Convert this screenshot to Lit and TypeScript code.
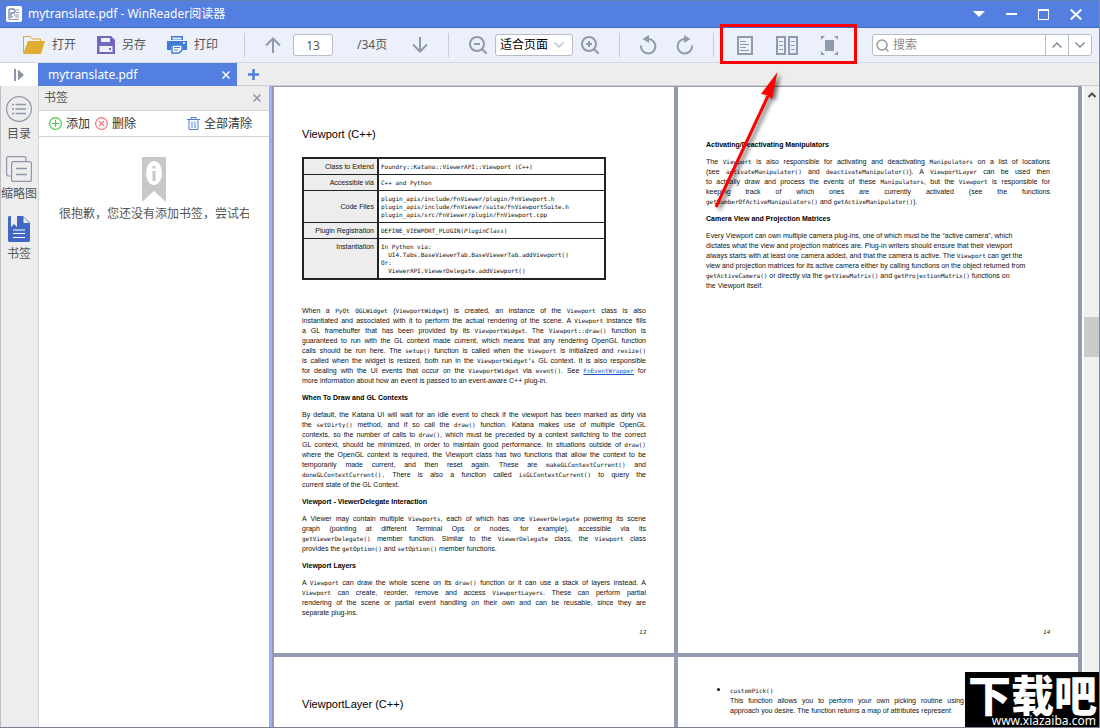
import { LitElement, html, css, svg } from "lit";
import { customElement, property } from "lit/decorators.js";
import { classMap } from "lit/directives/class-map.js";

/* Splits a line on back-ticks (code) and square brackets (link). */
const inline = (line: string) =>
  line.split(/(`[^`]+`|\[[^\]]+\])/).map((part) => {
    if (part.startsWith("`")) return html`<code>${part.slice(1, -1)}</code>`;
    if (part.startsWith("[")) return html`<a href="#wrapper"><code>${part.slice(1, -1)}</code></a>`;
    return part;
  });

const para = (lines: string[], ragged = false) =>
  html`<p class=${classMap({ ragged })}>${lines.map((l) => html`<span class="line">${inline(l)}</span>`)}</p>`;

@customElement("pdf-page")
export class PdfPage extends LitElement {
  @property({ type: Number }) number = 13;

  static styles = css`
    :host {
      display: flex;
      flex-direction: column;
      box-sizing: border-box;
      aspect-ratio: 400 / 566;
      padding: 28px 28px 16px;
      background: #fff;
      color: #111;
      font: 7px/10px "Liberation Sans", Arial, sans-serif;
      overflow: hidden;
    }
    h1 { margin: 12px 0 16px; font-size: 11px; line-height: 14px; font-weight: 400; color: #000; }
    h2 { margin: 0 0 7px; font-size: 7px; line-height: 10px; font-weight: 700; color: #000; }
    h2.first { margin-top: 25px; }
    p { margin: 0 0 7px; }
    .line { display: block; text-align: justify; text-align-last: justify; }
    .line:last-child, .ragged .line { text-align: left; text-align-last: left; }
    code { font: 6px/10px "DejaVu Sans Mono", monospace; }
    a { color: #1155cc; }
    table { width: 304px; border-collapse: collapse; margin-bottom: 26px; border: 2px solid #222; }
    th, td { border: 1px solid #222; padding: 4px 3px 3px; line-height: 8px; vertical-align: top; }
    th { width: 67px; background: #ededed; font-weight: 400; text-align: right; white-space: nowrap; border-right-width: 2px; }
    th.middle { vertical-align: middle; }
    td { padding-left: 2px; font: 6px/8px "DejaVu Sans Mono", monospace; white-space: pre; }
    footer { margin-top: auto; font-size: 6px; font-style: italic; text-align: right; }
    ul { margin: 0; padding: 0 86px 0 24px; list-style: disc; }
    li::marker { font-size: 10px; }
    .item { display: block; }
  `;

  private thirteen() {
    return html`
      <h1>Viewport (C++)</h1>
      <table>
        <tr><th scope="row">Class to Extend</th><td>Foundry::Katana::ViewerAPI::Viewport (C++)</td></tr>
        <tr><th scope="row">Accessible via</th><td>C++ and Python</td></tr>
        <tr><th scope="row" class="middle">Code Files</th><td>${"plugin_apis/include/FnViewer/plugin/FnViewport.h\nplugin_apis/include/FnViewer/suite/FnViewportSuite.h\nplugin_apis/src/FnViewer/plugin/FnViewport.cpp"}</td></tr>
        <tr><th scope="row">Plugin Registration</th><td>DEFINE_VIEWPORT_PLUGIN(<i>PluginClass</i>)</td></tr>
        <tr><th scope="row">Instantiation</th><td>${"In Python via:\n  UI4.Tabs.BaseViewerTab.BaseViewerTab.addViewport()\nOr:\n  ViewerAPI.ViewerDelegate.addViewport()"}</td></tr>
      </table>
      ${para([
        "When a `PyQt` `QGLWidget` (`ViewportWidget`) is created, an instance of the `Viewport` class is also",
        "instantiated and associated with it to perform the actual rendering of the scene. A `Viewport` instance fills",
        "a GL framebuffer that has been provided by its `ViewportWidget`. The `Viewport::draw()` function is",
        "guaranteed to run with the GL context made current, which means that any rendering OpenGL function",
        "calls should be run here. The `setup()` function is called when the `Viewport` is initialized and `resize()`",
        "is called when the widget is resized, both run in the `ViewportWidget’s` GL context. It is also responsible",
        "for dealing with the UI events that occur on the `ViewportWidget` via `event()`. See [FnEventWrapper] for",
        "more information about how an event is passed to an event-aware C++ plug-in.",
      ])}
      <h2>When To Draw and GL Contexts</h2>
      ${para([
        "By default, the Katana UI will wait for an idle event to check if the viewport has been marked as dirty via",
        "the `setDirty()` method, and if so call the `draw()` function. Katana makes use of multiple OpenGL",
        "contexts, so the number of calls to `draw()`, which must be preceded by a context switching to the correct",
        "GL context, should be minimized, in order to maintain good performance. In situations outside of `draw()`",
        "where the OpenGL context is required, the Viewport class has two functions that allow the context to be",
        "temporarily made current, and then reset again. These are `makeGLContextCurrent()` and",
        "`doneGLContextCurrent().` There is also a function called `isGLContextCurrent()` to query the",
        "current state of the GL Context.",
      ])}
      <h2>Viewport - ViewerDelegate Interaction</h2>
      ${para([
        "A Viewer may contain multiple `Viewports`, each of which has one `ViewerDelegate` powering its scene",
        "graph (pointing at different Terminal Ops or nodes, for example), accessible via its",
        "`getViewerDelegate()` member function. Similar to the `ViewerDelegate` class, the `Viewport` class",
        "provides the `getOption()` and `setOption()` member functions.",
      ])}
      <h2>Viewport Layers</h2>
      ${para([
        "A `Viewport` can draw the whole scene on its `draw()` function or it can use a stack of layers instead. A",
        "`Viewport` can create, reorder, remove and access `ViewportLayers`. These can perform partial",
        "rendering of the scene or partial event handling on their own and can be reusable, since they are",
        "separate plug-ins.",
      ])}
      <footer>13</footer>`;
  }

  private fourteen() {
    return html`
      <h2 class="first">Activating/Deactivating Manipulators</h2>
      ${para([
        "The `Viewport` is also responsible for activating and deactivating `Manipulators` on a list of locations",
        "(see `activateManipulator()` and `deactivateManipulator()`). A `ViewportLayer` can be used then",
        "to actually draw and process the events of these `Manipulators`, but the `Viewport` is responsible for",
        "keeping track of which ones are currently activated (see the functions",
        "`getNumberOfActiveManipulators()` and `getActiveManipulator()`).",
      ])}
      <h2>Camera View and Projection Matrices</h2>
      ${para([
        "Every Viewport can own multiple camera plug-ins, one of which must be the “active camera”, which",
        "dictates what the view and projection matrices are. Plug-in writers should ensure that their viewport",
        "always starts with at least one camera added, and that the camera is active. The `Viewport` can get the",
        "view and projection matrices for its active camera either by calling functions on the object returned from",
        "`getActiveCamera()` or directly via the `getViewMatrix()` and `getProjectionMatrix()` functions on",
        "the Viewport itself.",
      ], true)}
      <footer>14</footer>`;
  }

  private fifteen() {
    return html`
      <h1>ViewportLayer (C++)</h1>
      <table><tr><th scope="row">&nbsp;</th><td></td></tr></table>`;
  }

  private sixteen() {
    return html`
      <ul><li><code class="item">customPick()</code>
        <span class="line">This function allows you to perform your own picking routine using</span>
        <span class="line">approach you desire. The function returns a map of attributes represent</span>
      </li></ul>`;
  }

  render() {
    if (this.number === 13) return this.thirteen();
    if (this.number === 14) return this.fourteen();
    if (this.number === 15) return this.fifteen();
    return this.sixteen();
  }
}

const draw = (w: number, h: number, body: unknown) =>
  html`<svg width=${w} height=${h} viewBox="0 0 ${w} ${h}" fill="none" aria-hidden="true">${body}</svg>`;

const icons = {
  app: draw(16, 16, svg`<rect width="16" height="16" rx="2" fill="#fff"/><path d="M3 13V4q0-1 1-1h3q2 0 2 2t-2 2H5v5" stroke="#7187b8" stroke-width="1.3"/><path d="M10 4h3M10 6.5h3M8 9h5M5.500 11h2M9 11h4M3 13.500h10" stroke="#8a98b5" stroke-width="1.200"/>`),
  open: draw(22, 18, svg`<path d="M.5 16V.5h7l2 2.500h8V5" stroke="#e0a92e"/><path d="M5 5h17l-4 13H0Z" fill="#e0ac33"/>`),
  save: draw(18, 18, svg`<path fill-rule="evenodd" d="M0 0h14l4 4v14H0ZM4 2v4h9V2ZM2.500 10v6h13v-6Z" fill="#7566bd"/><path d="M12 13h2" stroke="#7566bd" stroke-width="2"/>`),
  print: draw(20, 18, svg`<path fill-rule="evenodd" d="M4 0h12v4H4ZM5.500 1.500v2h9v-2ZM0 5h20v9h-4v-4H4v4H0Z" fill="#3f7bd9"/><path d="M16 7h2" stroke="#fff" stroke-width="1.500"/><path d="M5 9v8h7l3-3V9Z" fill="#fff" stroke="#3f7bd9" stroke-width="1.500"/><path d="M7 11.500h6M7 14h4" stroke="#3f7bd9"/>`),
  up: draw(16, 16, svg`<path d="M8 16V1.500M1 8.500l7-7 7 7" stroke="#9199ae" stroke-width="2"/>`),
  down: draw(16, 16, svg`<path d="M8 0v14.500M1 7.500l7 7 7-7" stroke="#9199ae" stroke-width="2"/>`),
  zoomOut: draw(18, 18, svg`<circle cx="8" cy="8" r="7" stroke="#9199ae" stroke-width="2"/><path d="M13 13l5 5M5 8h6" stroke="#9199ae" stroke-width="2"/>`),
  zoomIn: draw(18, 18, svg`<circle cx="8" cy="8" r="7" stroke="#9199ae" stroke-width="2"/><path d="M13 13l5 5M5 8h6M8 5v6" stroke="#9199ae" stroke-width="2"/>`),
  left: draw(17, 20, svg`<path d="M1 10.500a7.200 7.200 0 1 0 7.500-6.500" stroke="#9199ae" stroke-width="2"/><path d="M9 0v8L2.500 4Z" fill="#9199ae"/>`),
  right: draw(17, 20, svg`<path d="M16 10.500a7.200 7.200 0 1 1-7.500-6.500" stroke="#9199ae" stroke-width="2"/><path d="M8 0v8l6.500-4Z" fill="#9199ae"/>`),
  single: draw(16, 19, svg`<rect x="1" y="1" width="14" height="17" stroke="#9199ae" stroke-width="2"/><path d="M3 5.500h6M3 8.500h9M3 11.500h6M3 14.500h9" stroke="#9199ae"/>`),
  double: draw(22, 19, svg`<path d="M1 1h8v17H1ZM13 1h8v17h-8Z" stroke="#9199ae" stroke-width="2"/><path d="M3 5.500h4M3 9.500h4M3 13.500h4M15 5.500h4M15 9.500h4M15 13.500h4" stroke="#9199ae"/>`),
  full: draw(17, 19, svg`<rect x="4" y="4" width="9" height="11" fill="#9199ae"/><path d="M0 0h4L0 4ZM17 0h-4l4 4ZM0 19h4l-4-4ZM17 19h-4l4-4Z" fill="#9199ae"/>`),
  search: draw(13, 13, svg`<circle cx="6" cy="6" r="5" stroke="#999" stroke-width="1.500"/><path d="M9.500 9.500l3 3" stroke="#999" stroke-width="1.500"/>`),
  chevUp: draw(10, 6, svg`<path d="M.5 5.500 5 1l4.500 4.500" stroke="#8289a0" stroke-width="1.500"/>`),
  chevDown: draw(10, 6, svg`<path d="M.5.500 5 5 9.500.500" stroke="#8289a0" stroke-width="1.500"/>`),
  menu: draw(12, 6, svg`<path d="M0 0h12L6 6Z" fill="#fff"/>`),
  min: draw(11, 2, svg`<path d="M0 1h11" stroke="#fff" stroke-width="2"/>`),
  max: draw(11, 11, svg`<path d="M.5 1h10v9.500H.5Z" stroke="#fff"/><path d="M0 1h11" stroke="#fff" stroke-width="2"/>`),
  close: draw(12, 11, svg`<path d="M.7.500l10.600 10M11.300.500.700 10.500" stroke="#fff" stroke-width="2"/>`),
  expand: draw(11, 12, svg`<path d="M1 0v12" stroke="#8c93a8" stroke-width="2"/><path d="M4 .500v11L10 6Z" fill="#8c93a8"/>`),
  tabClose: draw(8, 8, svg`<path d="M.5.500l7 7M7.500.500l-7 7" stroke="#fff" stroke-width="1.500"/>`),
  plus: draw(11, 11, svg`<path d="M5.500 0v11M0 5.500h11" stroke="#4f7de0" stroke-width="2.500"/>`),
  panelClose: draw(8, 8, svg`<path d="M.5.500l7 7M7.500.500l-7 7" stroke="#8f96a9" stroke-width="1.500"/>`),
  toc: draw(26, 26, svg`<circle cx="13" cy="13" r="12.400" stroke="#8f97ac" stroke-width="1.200"/><path d="M6 8.500h2M9.500 8.500H20M6 13h2M9.500 13H20M6 17.500h2M9.500 17.500H20" stroke="#8f97ac" stroke-width="1.500"/>`),
  thumbs: draw(26, 26, svg`<path d="M5 20H2.500Q.6 20 .6 18V2.500Q.6.600 2.500.600H18q2 0 2 2V5" stroke="#8f97ac" stroke-width="1.200"/><rect x="5.600" y="5.600" width="19.800" height="19.800" rx="2" stroke="#8f97ac" stroke-width="1.200"/><path d="M10 12.500h11M10 18.500h11" stroke="#8f97ac" stroke-width="1.500"/>`),
  marks: draw(22, 26, svg`<path d="M1 0h14l7 7v18l-1 1H1l-1-1V1Z" fill="#4268c6"/><path d="M3 0h6v11L6 8l-3 3ZM15.500 1v6H21Z" fill="#ededed"/><path d="M5 14h12M5 17.500h12M5 21.500h12" stroke="#fff"/>`),
  add: draw(13, 13, svg`<circle cx="6.500" cy="6.500" r="5.900" stroke="#4cc94c" stroke-width="1.200"/><path d="M6.500 3v7M3 6.500h7" stroke="#4cc94c" stroke-width="1.200"/>`),
  remove: draw(13, 13, svg`<circle cx="6.500" cy="6.500" r="5.900" stroke="#f07878" stroke-width="1.200"/><path d="M4 4l5 5M9 4l-5 5" stroke="#f07878" stroke-width="1.200"/>`),
  trash: draw(13, 13, svg`<path d="M0 2.500h13M4 2V.500h5V2M2 3v9.500h9V3M5 4.500V11M8 4.500V11" stroke="#4f7de0"/>`),
  empty: draw(24, 45, svg`<path d="M0 0h24v45L12 34 0 45Z" fill="#c8c8c8"/><ellipse cx="12" cy="16" rx="8" ry="12" fill="#fff"/><path d="M12 9v2.500M12 14v10" stroke="#c8c8c8" stroke-width="3"/>`),
  scrollUp: draw(8, 6, svg`<path d="M.5 5 4 1.500 7.500 5" stroke="#505050" stroke-width="2"/>`),
};

@customElement("app-root")
export class AppRoot extends LitElement {
  static styles = css`
    :host {
      display: flex;
      flex-direction: column;
      box-sizing: border-box;
      position: relative;
      height: 100vh;
      overflow: hidden;
      border-right: 1px solid #8288a0;
      border-bottom: 1px solid #7a7f91;
      background: #ededed;
      color: #555;
      font: 12px/16px "Noto Sans", "Noto Sans CJK SC", sans-serif;
    }
    svg { display: block; flex: none; }
    button, input, select { font: inherit; color: inherit; margin: 0; padding: 0; border: 0; background: none; box-sizing: border-box; }
    button { display: flex; align-items: center; flex: none; white-space: nowrap; }
    .titlebar { display: flex; align-items: center; flex: none; height: 28px; box-sizing: border-box; padding: 0 17px 0 6px; gap: 6px; border-top: 1px solid #5f83b8; border-bottom: 1px solid #3f6cd0; background: #527fe0; color: #fff; }
    .titlebar .name { flex: 1; }
    .window { display: flex; align-items: center; gap: 21px; }
    .toolbar { display: flex; align-items: center; flex: none; height: 35px; box-sizing: border-box; padding: 0 7px 0 23px; border-bottom: 1px solid #d4d8e0; background: #ebf0fb; }
    .files { display: flex; gap: 21px; padding-right: 26px; }
    .files button { gap: 7px; }
    .sep { flex: none; width: 1px; height: 24px; background: #c8ccd6; }
    .group { display: flex; align-items: center; padding: 0 20px; }
    .pager { gap: 12px; }
    .pager input { width: 40px; height: 22px; border: 1px solid #b8bdc4; border-radius: 3px; background: #fff; text-align: center; }
    .pager .total { width: 55px; box-sizing: border-box; padding-left: 12px; }
    .zoom { gap: 8px; }
    .fit { position: relative; display: flex; align-items: center; }
    .fit select { appearance: none; width: 78px; height: 22px; padding-left: 4px; border: 1px solid #b8bdc4; border-radius: 3px; background: #fff; color: #000; }
    .fit svg { position: absolute; right: 9px; opacity: 0.5; pointer-events: none; }
    .turn { gap: 19px; }
    .views { display: flex; gap: 23px; padding-left: 23px; }
    .search { display: flex; align-items: center; width: 220px; height: 22px; box-sizing: border-box; margin-left: auto; border: 1px solid #b8bdc4; border-radius: 3px; background: #fff; }
    .search label { display: flex; align-items: center; gap: 4px; flex: 1; padding-left: 3px; }
    .search input { width: 100%; min-width: 0; outline: 0; }
    .search input::placeholder { color: #8a8a8a; opacity: 1; }
    .search button { width: 23px; height: 20px; justify-content: center; border-left: 1px solid #b8bdc4; }
    .tabs { display: flex; align-items: center; flex: none; height: 23px; }
    .expand { width: 38px; height: 23px; padding-left: 14px; background: #fff; }
    .tab { display: flex; align-items: center; justify-content: space-between; width: 199px; height: 23px; box-sizing: border-box; padding: 0 7px 0 10px; background: #527fe0; color: #fff; }
    .newtab { flex: 1; height: 23px; padding-left: 11px; border-bottom: 1px solid #cfcfcf; }
    .main { display: flex; flex: 1; min-height: 0; }
    .rail { display: flex; flex-direction: column; gap: 14px; flex: none; width: 39px; box-sizing: border-box; padding: 10px 1px 0 0; border-left: 1px solid #c0c0c0; border-right: 1px solid #d4d4d4; }
    .rail button { flex-direction: column; gap: 4px; }
    .panel { display: flex; flex-direction: column; flex: none; width: 230px; background: #fff; }
    .head { display: flex; align-items: center; justify-content: space-between; height: 25px; box-sizing: border-box; padding: 0 8px 0 5px; border-bottom: 1px solid #d4d4d4; background: #ededed; }
    .actions { display: flex; align-items: center; gap: 5px; height: 26px; box-sizing: border-box; padding: 0 17px 0 10px; border-bottom: 1px solid #d4d4d4; color: #333; }
    .actions button { gap: 4px; }
    .actions button:last-child { margin-left: auto; }
    .none { display: flex; flex-direction: column; align-items: center; gap: 4px; padding: 20px 20px 0; }
    .none span { align-self: stretch; overflow: hidden; white-space: nowrap; }
    .split { flex: none; width: 3px; background: #96b3f8; }
    .view { flex: 1; min-width: 0; overflow: hidden; padding: 1px 4px 0 2px; background: #949bb0; }
    .pages { display: grid; grid-template-columns: 1fr 1fr; gap: 4px; }
    .scroll { display: flex; flex-direction: column; align-items: center; flex: none; width: 17px; box-sizing: border-box; background: #f0f0f0; border-left: 2px solid #fff; }
    .scroll button { height: 17px; }
    .thumb { width: 100%; height: 40px; margin-top: 214px; background: #cbcbcb; }
    .notes { position: absolute; left: 0; top: 0; pointer-events: none; }
    .mark { position: absolute; right: -1px; bottom: -1px; width: 135px; height: 56px; overflow: hidden; background: #000; color: #fff; text-align: center; }
    .mark b { display: block; font: 900 43px/42px "Noto Sans CJK SC", sans-serif; white-space: nowrap; }
    .mark small { display: block; padding-right: 4px; font-size: 12px; line-height: 14px; text-align: right; }
  `;

  private pages = [13, 14, 15, 16];

  render() {
    return html`
      <header class="titlebar">
        ${icons.app}<span class="name">mytranslate.pdf - WinReader阅读器</span>
        <div class="window">
          <button aria-label="菜单">${icons.menu}</button><button aria-label="最小化">${icons.min}</button>
          <button aria-label="最大化">${icons.max}</button><button aria-label="关闭">${icons.close}</button>
        </div>
      </header>
      <nav class="toolbar">
        <div class="files">
          <button>${icons.open}打开</button><button>${icons.save}另存</button><button>${icons.print}打印</button>
        </div>
        <i class="sep"></i>
        <div class="group pager">
          <button aria-label="上一页">${icons.up}</button>
          <input aria-label="页码" value="13" />
          <span class="total">/34页</span>
          <button aria-label="下一页">${icons.down}</button>
        </div>
        <i class="sep"></i>
        <div class="group zoom">
          <button aria-label="缩小">${icons.zoomOut}</button>
          <span class="fit"><select aria-label="缩放"><option>适合页面</option></select>${icons.chevDown}</span>
          <button aria-label="放大">${icons.zoomIn}</button>
        </div>
        <i class="sep"></i>
        <div class="group turn">
          <button aria-label="向左旋转">${icons.left}</button><button aria-label="向右旋转">${icons.right}</button>
        </div>
        <i class="sep"></i>
        <div class="views">
          <button aria-label="单页">${icons.single}</button><button aria-label="双页">${icons.double}</button><button aria-label="全屏">${icons.full}</button>
        </div>
        <div class="search">
          <label>${icons.search}<input aria-label="搜索" placeholder="搜索" /></label>
          <button aria-label="上一个">${icons.chevUp}</button><button aria-label="下一个">${icons.chevDown}</button>
        </div>
      </nav>
      <div class="tabs">
        <button class="expand" aria-label="展开">${icons.expand}</button>
        <div class="tab">mytranslate.pdf<button aria-label="关闭标签">${icons.tabClose}</button></div>
        <button class="newtab" aria-label="新标签">${icons.plus}</button>
      </div>
      <div class="main">
        <nav class="rail">
          <button>${icons.toc}目录</button><button>${icons.thumbs}缩略图</button><button>${icons.marks}书签</button>
        </nav>
        <aside class="panel">
          <div class="head">书签<button aria-label="关闭书签">${icons.panelClose}</button></div>
          <div class="actions">
            <button>${icons.add}添加</button><button>${icons.remove}删除</button><button>${icons.trash}全部清除</button>
          </div>
          <div class="none">${icons.empty}<span>很抱歉，您还没有添加书签，尝试右</span></div>
        </aside>
        <div class="split"></div>
        <main class="view">
          <div class="pages">${this.pages.map((n) => html`<pdf-page .number=${n}></pdf-page>`)}</div>
        </main>
        <div class="scroll"><button aria-label="向上滚动">${icons.scrollUp}</button><div class="thumb"></div></div>
      </div>
      <svg class="notes" width="900" height="220" fill="none" aria-hidden="true">
        <rect x="721.500" y="25.500" width="134" height="37" stroke="#f00" stroke-width="3"/>
        <g style="filter: drop-shadow(3px 2px 2px rgba(0, 0, 0, 0.6))">
          <path d="M716 207 768 96" stroke="#f00" stroke-width="3"/>
          <path d="M777.500 72 761 94l6 1 5 4Z" fill="#f00"/>
        </g>
      </svg>
      <div class="mark"><b>下载吧</b><small>www.xiazaiba.com</small></div>
    `;
  }
}
